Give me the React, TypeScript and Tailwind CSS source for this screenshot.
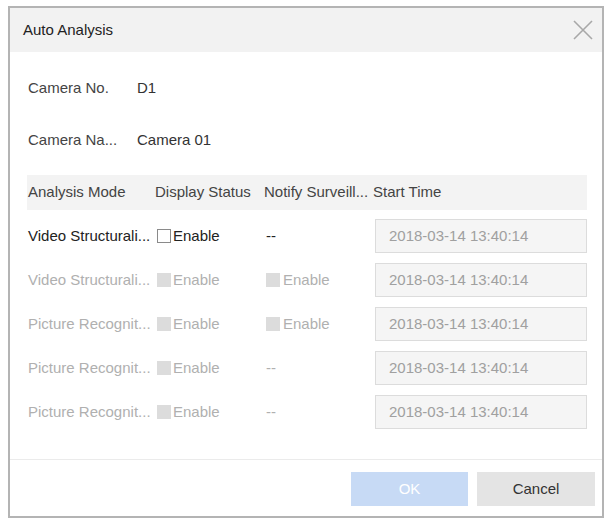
import React from "react";

type Row = {
  mode: string;
  active: boolean;
  notify: "dash" | "check";
  time: string;
};

const rows: Row[] = [
  { mode: "Video Structurali...", active: true, notify: "dash", time: "2018-03-14 13:40:14" },
  { mode: "Video Structurali...", active: false, notify: "check", time: "2018-03-14 13:40:14" },
  { mode: "Picture Recognit...", active: false, notify: "check", time: "2018-03-14 13:40:14" },
  { mode: "Picture Recognit...", active: false, notify: "dash", time: "2018-03-14 13:40:14" },
  { mode: "Picture Recognit...", active: false, notify: "dash", time: "2018-03-14 13:40:14" },
];

const CloseIcon = () => (
  <svg width="20" height="20" viewBox="0 0 20 20" className="text-[#a8a8a8]">
    <path d="M1 1 L19 19 M19 1 L1 19" stroke="currentColor" strokeWidth="1.6" fill="none" />
  </svg>
);

const Check = ({ active }: { active: boolean }) =>
  active ? (
    <span className="block w-[14px] h-[14px] border border-[#8a8a8a] bg-white" />
  ) : (
    <span className="block w-[14px] h-[14px] bg-[#dcdcdc]" />
  );

export default function App() {
  return (
    <div className="w-[607px] h-[520px] bg-white pl-2 pt-[6px] font-['Liberation_Sans',Arial,sans-serif] text-[15px]">
      <div className="w-[596px] h-[512px] border-2 border-[#b4b4b4] flex flex-col bg-white">
        {/* header */}
        <div className="h-[44px] bg-[#f2f2f2] flex items-center justify-between pl-[13px] pr-[9px]">
          <span className="text-[#222]">Auto Analysis</span>
          <CloseIcon />
        </div>

        {/* body */}
        <div className="flex-1 pt-[18px] pl-[17px]">
          <div className="h-[36px] flex items-center text-[#444]">
            <span className="w-[110px] pl-[1px]">Camera No.</span>
            <span className="text-[#333]">D1</span>
          </div>
          <div className="h-[36px] mt-4 flex items-center text-[#444]">
            <span className="w-[110px] pl-[1px]">Camera Na...</span>
            <span className="text-[#333]">Camera 01</span>
          </div>

          <div className="mt-[17px] w-[560px]">
            <div className="h-[35px] bg-[#f3f3f3] grid grid-cols-[128px_109px_109px_1fr] items-center text-[#444] whitespace-nowrap">
              <span className="pl-[1px]">Analysis Mode</span>
              <span>Display Status</span>
              <span>Notify Surveill...</span>
              <span>Start Time</span>
            </div>

            <div className="mt-1">
              {rows.map((r, i) => {
                const tone = r.active ? "text-[#222]" : "text-[#b0b0b0]";
                return (
                  <div
                    key={i}
                    className={`h-[44px] grid grid-cols-[128px_109px_109px_1fr] items-center whitespace-nowrap ${tone}`}
                  >
                    <span className="pl-[1px]">{r.mode}</span>
                    <span className="flex items-center gap-[2px] pl-[2px]">
                      <Check active={r.active} />
                      <span>Enable</span>
                    </span>
                    {r.notify === "dash" ? (
                      <span className="pl-[2px]">--</span>
                    ) : (
                      <span className="flex items-center gap-[3px] pl-[2px]">
                        <Check active={false} />
                        <span>Enable</span>
                      </span>
                    )}
                    <div className="ml-[2px] h-[34px] border border-[#dcdcdc] bg-[#f5f5f5] flex items-center pl-[13px] text-[#a0a0a0]">
                      {r.time}
                    </div>
                  </div>
                );
              })}
            </div>
          </div>
        </div>

        {/* footer */}
        <div className="h-[57px] border-t border-[#ebebeb] flex justify-end items-start pt-[12px] pr-[7px] gap-[9px]">
          <button className="w-[117px] h-[34px] bg-[#c7daf5] text-white">OK</button>
          <button className="w-[118px] h-[34px] bg-[#e4e4e4] text-[#333]">Cancel</button>
        </div>
      </div>
    </div>
  );
}
